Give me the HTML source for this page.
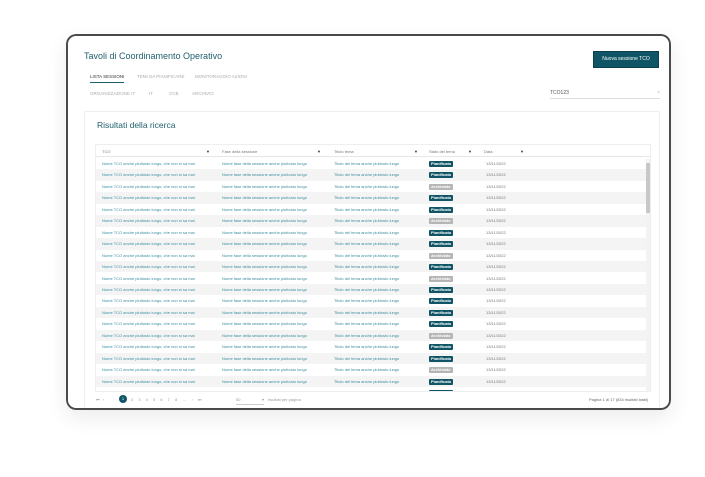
<!DOCTYPE html>
<html><head><meta charset="utf-8"><style>
*{margin:0;padding:0;box-sizing:border-box}
body{width:705px;height:477px;background:#fff;font-family:"Liberation Sans",sans-serif;position:relative;overflow:hidden}
.frame{position:absolute;left:66px;top:34px;width:605px;height:376px;border-radius:10px;background:#fff;box-shadow:0 8px 22px rgba(0,0,0,0.08);overflow:hidden}
.frame:after{content:"";position:absolute;left:0;top:0;right:0;bottom:0;border:2px solid #4a4a4a;border-radius:10px;pointer-events:none}
.a{position:absolute;white-space:nowrap}
.title{left:18px;top:17px;font-size:9px;color:#1f5f6e}
.btn{left:527px;top:17px;width:66px;height:17px;background:#0f5566;border:1px solid #0a3f4b;color:#fff;font-size:5px;line-height:15px;text-align:center}
.tab{font-size:4.5px;color:#aaa;top:40px}
.tab2{font-size:4.5px;color:#aaa;top:57px}
.search{left:484px;top:56px;width:110px;height:9px;border-bottom:1px solid #ddd;font-size:5px;color:#555}
.card{position:absolute;left:18px;top:77px;width:576px;height:300px;border:1px solid #eee;border-radius:2px;background:#fff}
.rr{left:31px;top:86px;font-size:8.5px;color:#1f5f6e}
.tbl{position:absolute;left:29px;top:110px;width:556px;height:248px;border:1px solid #eee;overflow:hidden}
.hd{position:absolute;left:0;top:0;width:556px;height:12px;border-bottom:1px solid #e6e6e6;font-size:4px;color:#777}
.row{position:absolute;left:0;width:550px;height:11.45px;font-size:4px;color:#3a8ea2;line-height:11.45px}
.row.g{background:#f4f4f4}
.row span{position:absolute}
.b{top:3px;height:6px;line-height:6px;padding:0 2px;font-size:4px;color:#fff;border-radius:1px;background:#0f5566;font-weight:bold}
.b.x{background:#b5b5b5}
.d{color:#777}
.f{font-size:4px;color:#333}
.pg{position:absolute;top:363px;font-size:4px;color:#999}
</style></head><body>
<div class="frame">
<div class="a title">Tavoli di Coordinamento Operativo</div>
<div class="a btn">Nuova sessione TCO</div>
<div class="a tab" style="left:24px;color:#333;border-bottom:1px solid #1f5f6e;padding-bottom:3px">LISTA SESSIONI</div>
<div class="a tab" style="left:71px">TEMI DA PIANIFICARE</div>
<div class="a tab" style="left:129px">MONITORAGGIO AZIONI</div>
<div class="a tab2" style="left:24px">ORGANIZZAZIONE IT</div>
<div class="a tab2" style="left:83px">IT</div>
<div class="a tab2" style="left:103px">CCB</div>
<div class="a tab2" style="left:126px">ARCHIVIO</div>
<div class="a search">TCO123<span style="position:absolute;right:0;color:#bbb">×</span></div>
<div class="card"></div>
<div class="a rr">Risultati della ricerca</div>
<div class="tbl" id="t">
<div class="hd"><span class="a" style="left:6px;top:4px">TCO</span><span class="a f" style="left:110px;top:4px">▼</span>
<span class="a" style="left:126px;top:4px">Fase della sessione</span><span class="a f" style="left:221px;top:4px">▼</span>
<span class="a" style="left:238px;top:4px">Titolo tema</span><span class="a f" style="left:318px;top:4px">▼</span>
<span class="a" style="left:333px;top:4px">Stato del tema</span><span class="a f" style="left:372px;top:4px">▼</span>
<span class="a" style="left:388px;top:4px">Data</span><span class="a f" style="left:424px;top:4px">▼</span></div>
<div style="position:absolute;left:550px;top:14px;width:5px;height:232px;background:#f3f3f3"></div>
<div style="position:absolute;left:550px;top:18px;width:4px;height:50px;background:#c8c8c8"></div>
</div>
<div class="pg" style="left:30px">⏮ &nbsp; ‹ </div>
<div style="position:absolute;left:53px;top:361px;width:8px;height:8px;border-radius:50%;background:#0f5566;color:#fff;font-size:4px;text-align:center;line-height:8px">1</div>
<div class="pg" style="left:65px;word-spacing:4px">2 3 4 5 6 7 8 … › ⏭</div>
<div class="pg" style="left:170px;width:28px;border-bottom:1px solid #ccc;padding-bottom:2px">50 <span style="float:right">▾</span></div>
<div class="pg" style="left:202px">risultati per pagina</div>
<div class="pg" style="left:523px;color:#666">Pagina 1 di 17 (834 risultati totali)</div>
</div>
<script>
var s="PPAPPAPPAPAPPPPAPPAPP",t=document.getElementById('t'),h='';
for(var i=0;i<21;i++){var y=13+i*11.45;var p=s[i]=='P';
h+='<div class="row'+(i%2?' g':'')+'" style="top:'+y+'px"><span style="left:6px">Nome TCO anche piuttosto lungo, che non si sa mai</span><span style="left:126px">Nome fase della sessione anche piuttosto lungo</span><span style="left:238px">Titolo del tema anche piuttosto lungo</span><span class="b'+(p?'':' x')+'" style="left:333px">'+(p?'Pianificato':'Archiviato')+'</span><span class="d" style="left:390px">13/11/2022</span></div>';}
t.insertAdjacentHTML('afterbegin',h);
</script>
</body></html>
